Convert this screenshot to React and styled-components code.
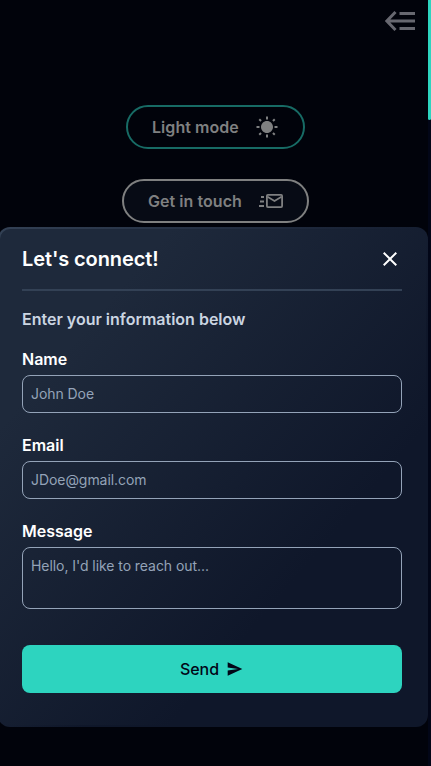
import React from "react";
import styled, { createGlobalStyle, css } from "styled-components";
import { IoMdSend, IoMdSunny, IoMdClose } from "react-icons/io";

const GlobalStyle = createGlobalStyle`
  * { box-sizing: border-box; }
  html, body { margin: 0; height: 100%; overflow: hidden; background: #01030b; }
  body, button, input, textarea { font-family: Inter, sans-serif; }
`;

const Page = styled.div`
  position: relative;
  width: 431px;
  height: 766px;
  overflow: hidden;
  background: #01030b;
`;

const Header = styled.header`
  display: flex;
  justify-content: flex-end;
  height: 105px;
  padding: 6px 16px 0 0;
  color: #676870;
`;

const MenuButton = styled.button`
  width: 30px;
  height: 30px;
  padding: 0;
  border: 0;
  background: none;
  color: inherit;
  svg { display: block; }
`;

const Actions = styled.div`
  display: flex;
  flex-direction: column;
  align-items: center;
  gap: 30px;
`;

const PillButton = styled.button`
  display: flex;
  align-items: center;
  justify-content: space-between;
  width: ${(p) => (p.$accent ? "179px" : "187px")};
  height: 44px;
  padding: 0 24px;
  border: 2px solid ${(p) => (p.$accent ? "#176b65" : "#7f8080")};
  border-radius: 22px;
  background: ${(p) => (p.$accent ? "transparent" : "#070b15")};
  color: #7f8081;
  font-size: 16px;
  font-weight: 600;
  line-height: 24px;
  letter-spacing: 0.05px;
  white-space: nowrap;
  svg { display: block; flex: none; }
`;

const Scrollbar = styled.div`
  position: absolute;
  top: 0;
  right: 0;
  width: 3px;
  height: 100%;
  background: #020617;
`;

const Thumb = styled.div`
  height: 120px;
  border-radius: 0 0 3px 3px;
  background: #2dd4bf;
`;

const Dialog = styled.section`
  position: absolute;
  left: -2px;
  top: 227px;
  width: 430px;
  height: 500px;
  padding: 16px 24px 0 22px;
  border: 2px solid transparent;
  border-radius: 12px;
  background:
    linear-gradient(to bottom right, #1e293b 20%, #0f172a 70%) padding-box,
    linear-gradient(to bottom right, #334155, #0f172a 60%) border-box;
`;

const DialogHeader = styled.div`
  display: flex;
  align-items: center;
  justify-content: space-between;
  height: 46px;
  padding-bottom: 16px;
  border-bottom: 2px solid #334155;
`;

const Title = styled.h2`
  margin: 0;
  color: #fff;
  font-size: 20px;
  font-weight: 600;
  line-height: 28px;
  letter-spacing: -0.1px;
`;

const CloseButton = styled.button`
  padding: 0;
  border: 0;
  background: none;
  color: #fff;
  svg { display: block; }
`;

const Intro = styled.p`
  margin: 16px 0;
  color: #cbd5e1;
  font-size: 16px;
  font-weight: 600;
  line-height: 24px;
`;

const Field = styled.label`
  display: block;
  margin-bottom: 20px;
  color: #fff;
  font-size: 16px;
  font-weight: 600;
  line-height: 24px;
`;

const control = css`
  display: block;
  width: 100%;
  margin: 4px 0 0;
  padding: 8px;
  border: 1px solid #94a3b8;
  border-radius: 8px;
  outline: 0;
  background: transparent;
  color: #fff;
  font-size: 14px;
  line-height: 20px;
  letter-spacing: -0.06px;
  &::placeholder { color: #94a3b8; opacity: 1; }
`;

const Input = styled.input`
  ${control}
  height: 38px;
  padding: 7px 8px 9px;
`;

const TextArea = styled.textarea`
  ${control}
  height: 62px;
  resize: none;
`;

const SendButton = styled.button`
  display: flex;
  align-items: center;
  justify-content: center;
  gap: 7px;
  width: 100%;
  height: 48px;
  margin-top: 36px;
  border: 0;
  border-radius: 8px;
  background: #2dd4bf;
  color: #020617;
  font-size: 16px;
  font-weight: 500;
  line-height: 24px;
`;

const MenuIcon = () => (
  <svg width="30" height="30" viewBox="0 0 30 30" fill="none" stroke="currentColor" strokeWidth="3">
    <path d="M14.5 7.5H30M2 15H30M14.5 22.5H30M10.5 6L1.8 15L10.5 24" />
  </svg>
);

const MailIcon = () => (
  <svg width="24" height="24" viewBox="0 0 24 24" fill="none" stroke="currentColor" strokeWidth="1.8">
    <rect x="7.9" y="5.9" width="15.2" height="12.2" rx="1" />
    <path d="M8.5 7.8L15.5 12L22.5 7.8M2 8H5M1 12.5H5M0 17H5" />
  </svg>
);

export default function App() {
  return (
    <Page>
      <GlobalStyle />
      <Header>
        <MenuButton aria-label="Menu"><MenuIcon /></MenuButton>
      </Header>
      <Actions>
        <PillButton $accent>Light mode <IoMdSunny size={24} /></PillButton>
        <PillButton>Get in touch <MailIcon /></PillButton>
      </Actions>
      <Scrollbar><Thumb /></Scrollbar>
      <Dialog role="dialog">
        <DialogHeader>
          <Title>Let's connect!</Title>
          <CloseButton aria-label="Close"><IoMdClose size={24} /></CloseButton>
        </DialogHeader>
        <Intro>Enter your information below</Intro>
        <Field>Name<Input placeholder="John Doe" /></Field>
        <Field>Email<Input placeholder="JDoe@gmail.com" /></Field>
        <Field>Message<TextArea placeholder="Hello, I'd like to reach out..." /></Field>
        <SendButton>Send <IoMdSend size={18} /></SendButton>
      </Dialog>
    </Page>
  );
}
